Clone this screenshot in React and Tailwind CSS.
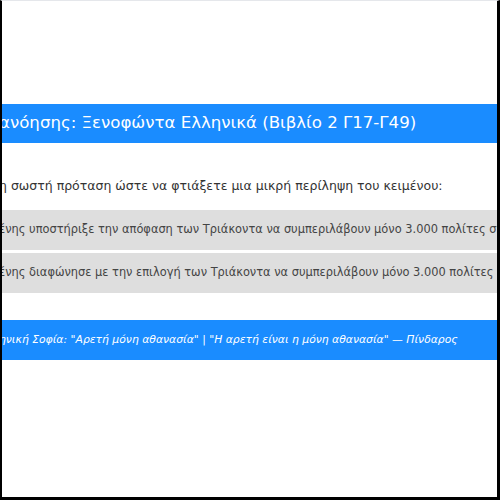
const App = () => (
  <div className="w-[500px] h-[500px] bg-white border-l-2 border-r-[3px] border-b-[3px] border-t border-l-black border-r-black border-b-black border-t-gray-200 overflow-hidden font-['DejaVu_Sans',sans-serif]">
    <div className="pt-[103px] ml-[-3px] whitespace-nowrap">
      <div className="h-[39px] bg-[#1a8cff] flex items-center">
        <h1 className="text-[16.6px] text-white">ανόησης: Ξενοφώντα Ελληνικά (Βιβλίο 2 Γ17-Γ49)</h1>
      </div>
      <p className="mt-[34px] text-[12.5px] text-[#333]">η σωστή πρόταση ώστε να φτιάξετε μια μικρή περίληψη του κειμένου:</p>
      <div className="mt-[14px] flex flex-col gap-[3px]">
        <div className="h-[40px] bg-[#dedede] flex items-center text-[11.4px] text-[#444]">
          ένης υποστήριξε την απόφαση των Τριάκοντα να συμπεριλάβουν μόνο 3.000 πολίτες στη
        </div>
        <div className="h-[40px] bg-[#dedede] flex items-center text-[11.4px] text-[#444]">
          ένης διαφώνησε με την επιλογή των Τριάκοντα να συμπεριλάβουν μόνο 3.000 πολίτες στη
        </div>
      </div>
      <div className="mt-[27px] h-[40px] bg-[#1a8cff] flex items-center">
        <p className="text-[10.8px] italic text-white">ηνική Σοφία: "Αρετή μόνη αθανασία" | "Η αρετή είναι η μόνη αθανασία" — Πίνδαρος</p>
      </div>
    </div>
  </div>
);

export default App;
